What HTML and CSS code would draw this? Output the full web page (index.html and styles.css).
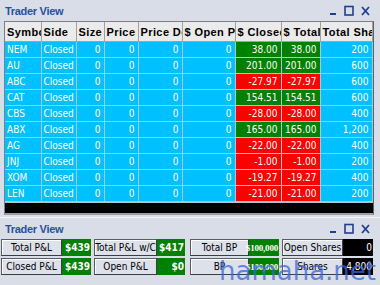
FILE: index.html
```html
<!DOCTYPE html>
<html lang="en">
<head>
    <meta charset="UTF-8">
    <title>Trader View</title>
    <link rel="stylesheet" href="styles.css">
</head>
<body>
    <div class="window trades">
        <div class="titlebar">
            <span class="title">Trader View</span>
            <div class="controls">
                <svg width="48" height="12" viewBox="0 0 48 12">
                    <rect x="2" y="8" width="6" height="2" fill="#1f3f8f"/>
                    <rect x="17" y="1.5" width="8" height="8.5" fill="none" stroke="#1f3f8f" stroke-width="1.6"/>
                    <path d="M34 2 L41 10 M41 2 L34 10" stroke="#1f3f8f" stroke-width="1.8"/>
                </svg>
            </div>
        </div>
        <div class="grid-frame">
            <table class="grid">
                <colgroup>
                    <col style="width:36px"><col style="width:35px"><col style="width:28px">
                    <col style="width:34px"><col style="width:44px"><col style="width:53px">
                    <col style="width:46px"><col style="width:39px"><col style="width:52px">
                </colgroup>
                <thead>
                    <tr>
                        <th>Symbol</th><th>Side</th><th>Size</th><th>Price</th><th>Price Delta</th>
                        <th>$ Open P&amp;L</th><th>$ Closed P&amp;L</th><th>$ Total P&amp;L</th><th>Total Shares</th>
                    </tr>
                </thead>
                <tbody id="rows"></tbody>
            </table>
            <div class="grid-end"></div>
        </div>
    </div>
    <div class="window summary">
        <div class="titlebar">
            <span class="title">Trader View</span>
            <div class="controls">
                <svg width="48" height="12" viewBox="0 0 48 12">
                    <rect x="2" y="8" width="6" height="2" fill="#1f3f8f"/>
                    <rect x="17" y="1.5" width="8" height="8.5" fill="none" stroke="#1f3f8f" stroke-width="1.6"/>
                    <path d="M34 2 L41 10 M41 2 L34 10" stroke="#1f3f8f" stroke-width="1.8"/>
                </svg>
            </div>
        </div>
        <div class="stats">
            <div class="stat-row">
                <div class="stat s1"><span class="label">Total P&amp;L</span><span class="value green">$439</span></div>
                <div class="stat s2"><span class="label">Total P&amp;L w/C</span><span class="value green">$417</span></div>
                <div class="stat s3"><span class="label">Total BP</span><span class="value green money">$100,000</span></div>
                <div class="stat s4"><span class="label">Open Shares</span><span class="value black">0</span></div>
            </div>
            <div class="stat-row">
                <div class="stat s1"><span class="label">Closed P&amp;L</span><span class="value green">$439</span></div>
                <div class="stat s2"><span class="label">Open P&amp;L</span><span class="value green">$0</span></div>
                <div class="stat s3"><span class="label">BP</span><span class="value green money">$100,000</span></div>
                <div class="stat s4"><span class="label">Shares</span><span class="value black">4,800</span></div>
            </div>
        </div>
    </div>
    <div class="watermark">hamaha.net</div>
    <script>
        const trades = [
            ['NEM', 38.00, 200], ['AU', 201.00, 600], ['ABC', -27.97, 600],
            ['CAT', 154.51, 600], ['CBS', -28.00, 400], ['ABX', 165.00, 1200],
            ['AG', -22.00, 400], ['JNJ', -1.00, 200], ['XOM', -19.27, 400],
            ['LEN', -21.00, 200]
        ];

        // P&L cells are green when positive, red when negative
        const body = document.getElementById('rows');
        body.innerHTML = trades.map(([sym, pnl, shares]) => {
            const cls = pnl < 0 ? 'loss' : 'gain';
            const val = pnl.toFixed(2);
            return `
                <tr>
                    <td class="txt">${sym}</td>
                    <td class="txt">Closed</td>
                    <td>0</td><td>0</td><td>0</td><td>0</td>
                    <td class="${cls}">${val}</td>
                    <td class="${cls}">${val}</td>
                    <td>${shares.toLocaleString('en-US')}</td>
                </tr>`;
        }).join('');
    </script>
</body>
</html>
```

FILE: styles.css
```css
body {
    margin: 0;
    width: 380px;
    height: 285px;
    overflow: hidden;
    position: relative;
    background-color: #d9dde7;
    font-family: "DejaVu Sans Condensed", "Liberation Sans", sans-serif;
    font-size: 10px;
}
.window {
    background-color: #d9dde7;
}
.titlebar {
    display: flex;
    align-items: center;
    justify-content: space-between;
    height: 21px;
    padding-left: 5px;
    padding-right: 4px;
}
.title {
    color: #2550a0;
    font-family: "Liberation Sans", sans-serif;
    font-weight: bold;
    font-size: 11px;
    letter-spacing: -0.3px;
}
.controls svg {
    display: block;
}
.grid-frame {
    margin-left: 4px;
    width: 368px;
    border: 1px solid #7c7f86;
    border-bottom: 2px solid #9a9da4;
    border-right: 1px solid #5e6066;
    background-color: #ffffff;
}
.grid {
    border-collapse: collapse;
    table-layout: fixed;
    width: 367px;
}
th, td {
    white-space: nowrap;
    overflow: hidden;
    padding: 0 3px 0 3px;
}
th {
    height: 19px;
    background-color: #ebebeb;
    color: #000;
    font-family: "Liberation Sans", sans-serif;
    font-weight: bold;
    font-size: 11px;
    letter-spacing: 0.4px;
    text-align: left;
    border-right: 1px solid #a0a0a0;
    border-bottom: 1px solid #a0a0a0;
    padding-left: 2px;
    padding-right: 0;
    text-overflow: clip;
}
td {
    height: 15px;
    background-color: #00c0ff;
    color: #ffffff;
    text-align: right;
    border-right: 1px solid #b0c4d0;
    border-bottom: 1px solid #b0c4d0;
}
td.txt {
    text-align: left;
    padding-left: 2px;
}
td.gain {
    background-color: #008000;
}
td.loss {
    background-color: #ff0000;
}
.grid-end {
    height: 10px;
    background-color: #000000;
    border-top: 1px solid #b0c4d0;
}
.summary {
    margin-top: 2px;
    border-top: 1px solid #f4f5f8;
}
.stats {
    display: flex;
    flex-direction: column;
    gap: 2px;
    padding-left: 1px;
}
.stat-row {
    display: flex;
    gap: 3px;
    height: 17px;
}
.stat {
    display: flex;
}
.stat.s3 {
    margin-left: 2px;
}
.s1 .label { width: 61px; }
.s1 .value { width: 29px; }
.s2 .label { width: 63px; }
.s2 .value { width: 28px; }
.s3 .label { width: 59px; }
.s3 .value { width: 30px; }
.s4 .label { width: 61px; }
.s4 .value { width: 30px; }
.label {
    box-sizing: border-box;
    display: flex;
    align-items: center;
    justify-content: center;
    background-color: #dde1ec;
    border: 1px solid #5a5c62;
    border-right-color: #3c3d40;
    border-bottom-color: #3c3d40;
    box-shadow: inset 1px 1px 0 #ffffff;
    color: #000;
    font-size: 10px;
    white-space: nowrap;
}
.value {
    box-sizing: border-box;
    display: flex;
    align-items: center;
    justify-content: flex-end;
    padding-right: 1px;
    color: #ffffff;
    font-weight: bold;
    font-size: 10px;
}
.value.green {
    background-color: #008000;
}
.value.black {
    background-color: #000000;
    font-weight: normal;
}
.value.money {
    font-family: "Liberation Serif", serif;
    font-size: 9px;
    letter-spacing: -0.2px;
}
.watermark {
    position: absolute;
    left: 219px;
    top: 256px;
    font-family: "DejaVu Sans", sans-serif;
    font-size: 26px;
    color: rgba(60, 100, 215, 0.75);
    pointer-events: none;
}
```
